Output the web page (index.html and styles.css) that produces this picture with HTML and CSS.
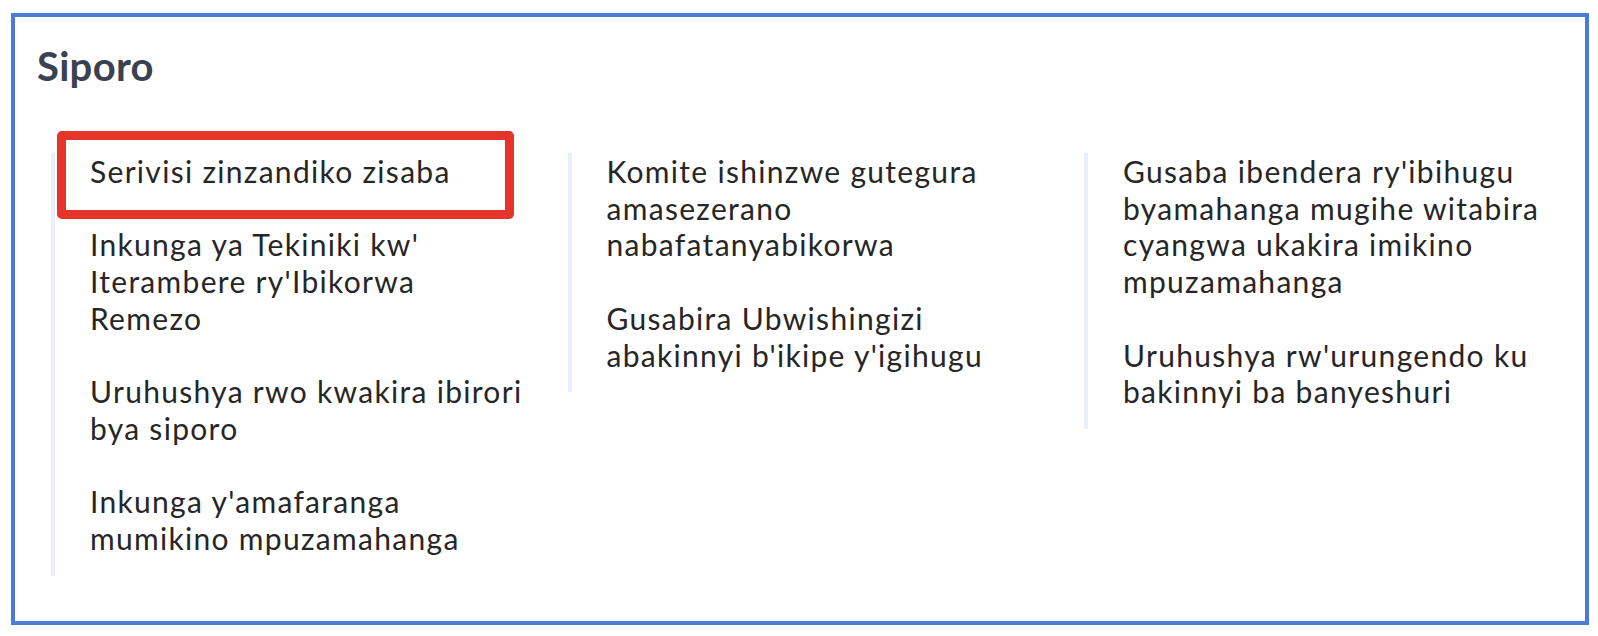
FILE: index.html
```html
<!DOCTYPE html>
<html lang="rw">
<head>
<meta charset="utf-8">
<title>Siporo</title>
<link rel="stylesheet" href="styles.css">
</head>
<body>
<section class="frame">
  <h2 class="title">Siporo</h2>
  <div class="columns">
    <ul class="col">
      <li class="item item-marked">Serivisi zinzandiko zisaba<span class="mark" aria-hidden="true"></span></li>
      <li class="item">Inkunga ya Tekiniki kw' Iterambere ry'Ibikorwa Remezo</li>
      <li class="item">Uruhushya rwo kwakira ibirori bya siporo</li>
      <li class="item">Inkunga y'amafaranga mumikino mpuzamahanga</li>
    </ul>
    <ul class="col">
      <li class="item">Komite ishinzwe gutegura amasezerano nabafatanyabikorwa</li>
      <li class="item">Gusabira Ubwishingizi abakinnyi b'ikipe y'igihugu</li>
    </ul>
    <ul class="col">
      <li class="item">Gusaba ibendera ry'ibihugu byamahanga mugihe witabira cyangwa ukakira imikino mpuzamahanga</li>
      <li class="item">Uruhushya rw'urungendo ku bakinnyi ba banyeshuri</li>
    </ul>
  </div>
</section>
</body>
</html>
```

FILE: styles.css
```css
html, body {
  margin: 0;
  padding: 0;
  background: #ffffff;
}

body {
  font-family: "Lato", "Noto Sans", "Liberation Sans", sans-serif;
  width: 1598px;
  height: 636px;
  overflow: hidden;
}

.frame {
  box-sizing: border-box;
  margin: 13px 0 0 11px;
  width: 1578px;
  height: 612px;
  border: 4px solid #4a7bd6;
  background: #ffffff;
  padding: 26px 22px 0 36px;
}

.title {
  margin: 0 0 64px -14px;
  font-size: 40px;
  line-height: 46px;
  font-weight: 700;
  letter-spacing: 0.3px;
  color: #3a4150;
}

.columns {
  display: grid;
  grid-template-columns: repeat(3, 477px);
  column-gap: 39.5px;
  align-items: start;
}

.col {
  list-style: none;
  margin: 0;
  padding: 0 0 19px 35px;
  border-left: 4px solid #e8eff8;
  display: flex;
  flex-direction: column;
  gap: 36.7px;
}

.item {
  font-size: 30px;
  line-height: 36.7px;
  letter-spacing: 1.3px;
  color: #262626;
}

.item-marked {
  position: relative;
}

.mark {
  position: absolute;
  left: -33px;
  top: -22px;
  width: 457px;
  height: 88px;
  box-sizing: border-box;
  border: 9px solid #e5352a;
  border-radius: 5px;
  pointer-events: none;
}
```
